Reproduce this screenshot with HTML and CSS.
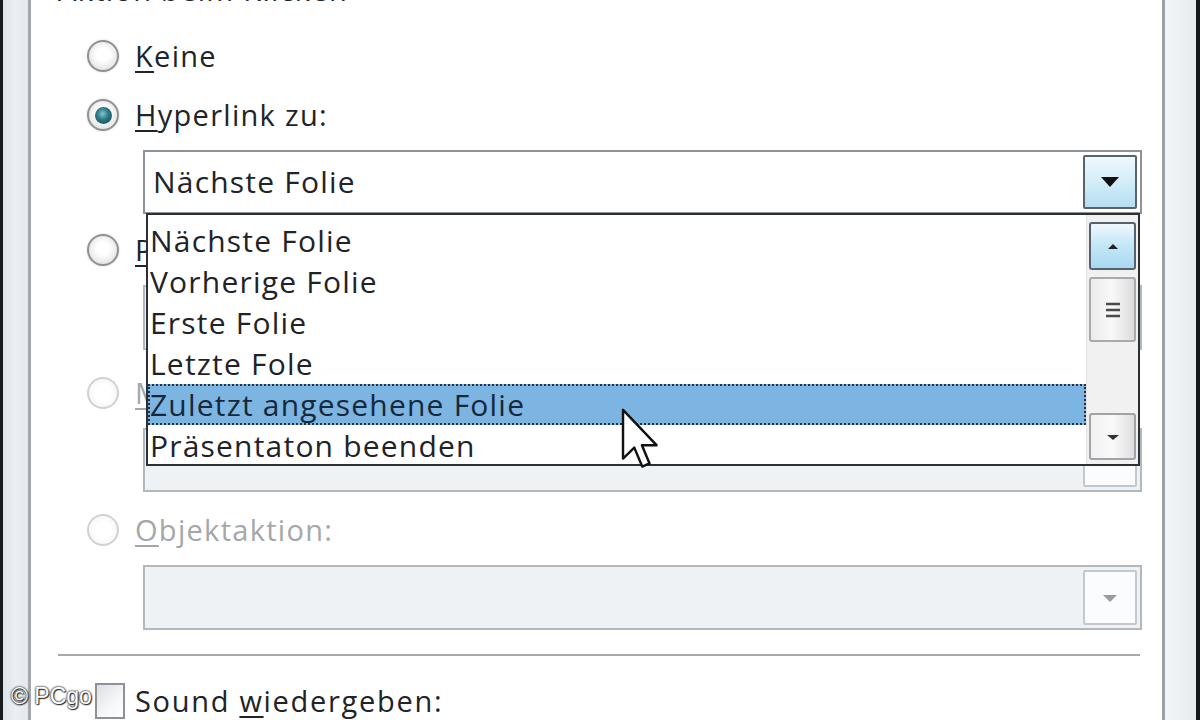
FILE: index.html
```html
<!DOCTYPE html>
<html lang="de">
<head>
<meta charset="utf-8">
<title>Aktion beim Klicken</title>
<link rel="stylesheet" href="styles.css">
</head>
<body>
<div class="window">
  <div class="edge-left"></div>
  <main class="content">
    <div class="title">Aktion beim Klicken</div>

    <div class="radio-row row-keine">
      <span class="radio"></span><span class="label"><u>K</u>eine</span>
    </div>
    <div class="radio-row row-hyper">
      <span class="radio checked"></span><span class="label"><u>H</u>yperlink zu:</span>
    </div>
    <div class="combo combo-hyper">
      <span class="combo-text">Nächste Folie</span>
      <span class="combo-btn">
        <svg width="22" height="14" viewBox="0 0 22 14"><path d="M2 2 L20 2 L11 12 Z" fill="#111"/></svg>
      </span>
    </div>

    <div class="radio-row row-prog">
      <span class="radio"></span><span class="label"><u>P</u>rogramm ausführen:</span>
    </div>
    <div class="field-row">
      <span class="field"></span>
      <span class="browse">Durchsuchen...</span>
    </div>

    <div class="radio-row row-makro disabled">
      <span class="radio"></span><span class="label"><u>M</u>akro ausführen:</span>
    </div>
    <div class="combo combo-makro disabled">
      <span class="combo-text"></span>
      <span class="combo-btn"></span>
    </div>

    <div class="radio-row row-objekt disabled">
      <span class="radio"></span><span class="label"><u>O</u>bjektaktion:</span>
    </div>
    <div class="combo combo-objekt disabled">
      <span class="combo-text"></span>
      <span class="combo-btn">
        <svg width="20" height="12" viewBox="0 0 20 12"><path d="M3 3 L17 3 L10 10 Z" fill="#9a9da0"/></svg>
      </span>
    </div>

    <div class="sep"></div>

    <div class="check-row">
      <span class="checkbox"></span><span class="label label-sound">Sound <u>w</u>iedergeben:</span>
    </div>
  </main>
  <div class="edge-right"></div>

  <div class="dropdown-list">
    <ul class="items">
      <li>Nächste Folie</li>
      <li>Vorherige Folie</li>
      <li>Erste Folie</li>
      <li>Letzte Fole</li>
      <li class="selected">Zuletzt angesehene Folie</li>
      <li>Präsentaton beenden</li>
    </ul>
    <div class="scrollbar">
      <span class="sb-btn sb-up">
        <svg width="16" height="10" viewBox="0 0 16 10"><path d="M3 8 L8 3 L13 8 Z" fill="#1c2226"/></svg>
      </span>
      <span class="sb-thumb">
        <svg width="18" height="20" viewBox="0 0 18 20"><path d="M2 4 H16 M2 10 H16 M2 16 H16" stroke="#4a4a4a" stroke-width="2.4"/></svg>
      </span>
      <span class="sb-track"></span>
      <span class="sb-btn sb-down">
        <svg width="18" height="10" viewBox="0 0 18 10"><path d="M3 3 L15 3 L9 8 Z" fill="#333"/></svg>
      </span>
    </div>
  </div>

  <svg class="cursor" width="40" height="64" viewBox="0 0 13 21">
    <path d="M0.6 0.6 L0.6 16.6 L4.3 13 L6.9 19.2 L9.3 18.2 L6.8 12.2 L11.6 12.2 Z" fill="#fff" stroke="#111" stroke-width="0.8" stroke-linejoin="round"/>
  </svg>

  <div class="watermark">© PCgo</div>
</div>
</body>
</html>
```

FILE: styles.css
```css
* { box-sizing: border-box; }

body {
  margin: 0;
  background: #ffffff;
  font-family: "Open Sans", "DejaVu Sans", sans-serif;
  color: #202428;
}

.window {
  position: relative;
  width: 1200px;
  height: 720px;
  overflow: hidden;
  display: flex;
  background: #ffffff;
}

.edge-left {
  flex: none;
  width: 31px;
  border-left: 3px solid #171b1f;
  border-right: 3px solid #a3a7ab;
  background: linear-gradient(90deg, #dde3e9, #eaeff3 50%, #e2e8ed);
}

.edge-right {
  flex: none;
  width: 38px;
  border-left: 3px solid #9da1a5;
  border-right: 4px solid #15191d;
  background: linear-gradient(90deg, #f2f5f7, #e7ecf0);
}

.content {
  flex: 1;
  padding-left: 27px;
  font-size: 29px;
  letter-spacing: 1.3px;
}

.title {
  height: 36px;
  line-height: 36px;
  margin-top: -28px;
  font-size: 29px;
  white-space: nowrap;
}

.radio-row {
  display: flex;
  align-items: center;
  gap: 16px;
  height: 40px;
  margin-left: 29px;
  white-space: nowrap;
}

.label { line-height: 40px; }
.label u { text-decoration-thickness: 2px; text-underline-offset: 4px; }
.label-sound { letter-spacing: 1.7px; }

.row-keine { margin-top: 28px; }
.row-hyper { margin-top: 19px; }
.row-prog { margin-top: 16px; }
.row-makro { margin-top: 23px; }
.row-objekt { margin-top: 18px; }

.radio {
  flex: none;
  width: 32px;
  height: 32px;
  border-radius: 50%;
  border: 2px solid #8f9294;
  background: radial-gradient(circle at 50% 45%, #ffffff 30%, #e6e7e8 70%, #cfd1d3);
  box-shadow: 0 0 2px rgba(120,120,120,0.4);
  display: flex;
  align-items: center;
  justify-content: center;
}

.radio.checked::after {
  content: "";
  width: 17px;
  height: 17px;
  border-radius: 50%;
  background: radial-gradient(circle at 45% 40%, #7fc6d0 0%, #2f7b8a 40%, #123a46 100%);
}

.disabled .radio {
  border-color: #cfd2d4;
  background: radial-gradient(circle, #ffffff 40%, #eeeff0);
  box-shadow: none;
}

.disabled .label { color: #a4a7aa; }

.combo {
  display: flex;
  align-items: stretch;
  margin-left: 85px;
  width: 999px;
  height: 64px;
  border: 2px solid #8e9397;
  background: #ffffff;
  padding: 3px;
}

.combo-hyper { margin-top: 15px; }
.combo-makro { margin-top: 15px; }
.combo-objekt { margin-top: 15px; height: 65px; }

.combo-text {
  flex: 1;
  padding-left: 5px;
  line-height: 54px;
  font-size: 30px;
  letter-spacing: 1.2px;
  white-space: nowrap;
}

.combo-btn {
  flex: none;
  width: 54px;
  border: 2px solid #59636b;
  border-radius: 2px;
  background: linear-gradient(180deg, #eef8fd 0%, #d6eef9 45%, #b5def2 100%);
  display: flex;
  align-items: center;
  justify-content: center;
}

.combo.disabled {
  background: #eef2f5;
  border-color: #b3b8bc;
}

.combo.disabled .combo-btn {
  border-color: #c3c8cc;
  background: #fbfcfd;
}

.field-row {
  display: flex;
  gap: 14px;
  margin-top: 15px;
  margin-left: 85px;
  width: 999px;
  height: 65px;
}

.field {
  flex: 1;
  border: 2px solid #b3b8bc;
  background: #eef2f5;
}

.browse {
  flex: none;
  width: 220px;
  border: 2px solid #b3b8bc;
  color: #a4a7aa;
  text-align: center;
  line-height: 61px;
  font-size: 24px;
}

.sep {
  margin-top: 24px;
  width: 1082px;
  height: 2px;
  background: #a6a9ac;
}

.check-row {
  display: flex;
  align-items: center;
  gap: 10px;
  margin-top: 26px;
  margin-left: 37px;
  height: 38px;
  white-space: nowrap;
}

.checkbox {
  flex: none;
  width: 30px;
  height: 36px;
  border: 2px solid #8e9296;
  background: linear-gradient(135deg, #dcdfe2, #f6f7f8 60%, #ffffff);
}

/* Open dropdown list, overlaying the dialog */
.dropdown-list {
  position: absolute;
  left: 146px;
  top: 213px;
  width: 994px;
  height: 253px;
  border: 2px solid #2b3034;
  background: #ffffff;
  display: flex;
}

.items {
  flex: 1;
  list-style: none;
  margin: 0;
  padding: 5px 0 0 0;
}

.items li {
  height: 41px;
  line-height: 41px;
  padding-left: 2px;
  font-size: 30px;
  letter-spacing: 1.2px;
  white-space: nowrap;
  color: #1f2327;
}

.items li.selected {
  background: #7db5e2;
  outline: 2px dotted #25323d;
  outline-offset: -2px;
  color: #16283a;
}

.scrollbar {
  flex: none;
  width: 52px;
  display: flex;
  flex-direction: column;
  align-items: center;
  background: #f1f1f1;
  border-left: 1px solid #e2e2e2;
  padding: 7px 0 4px;
  gap: 7px;
}

.sb-btn, .sb-thumb {
  flex: none;
  width: 47px;
  border-radius: 3px;
  display: flex;
  align-items: center;
  justify-content: center;
}

.sb-up {
  height: 48px;
  border: 2px solid #56626b;
  background: linear-gradient(180deg, #eef8fd, #c3e6f6 50%, #a9d9f1);
}

.sb-thumb {
  height: 65px;
  border: 2px solid #a7abaf;
  background: linear-gradient(90deg, #ececec, #f8f8f8 50%, #dcdcdc);
}

.sb-track { flex: 1; }

.sb-down {
  height: 47px;
  border: 2px solid #a0a4a8;
  background: linear-gradient(90deg, #f0f0f0, #fafafa 50%, #dedede);
}

.cursor {
  position: absolute;
  left: 621px;
  top: 408px;
}

.watermark {
  position: absolute;
  left: 11px;
  top: 683px;
  font-family: "Liberation Sans", Arial, sans-serif;
  font-size: 23px;
  color: #ffffff;
  text-shadow: 0 0 2px #222, 0 0 2px #222, 1px 1px 1px #333;
  white-space: nowrap;
}
```
